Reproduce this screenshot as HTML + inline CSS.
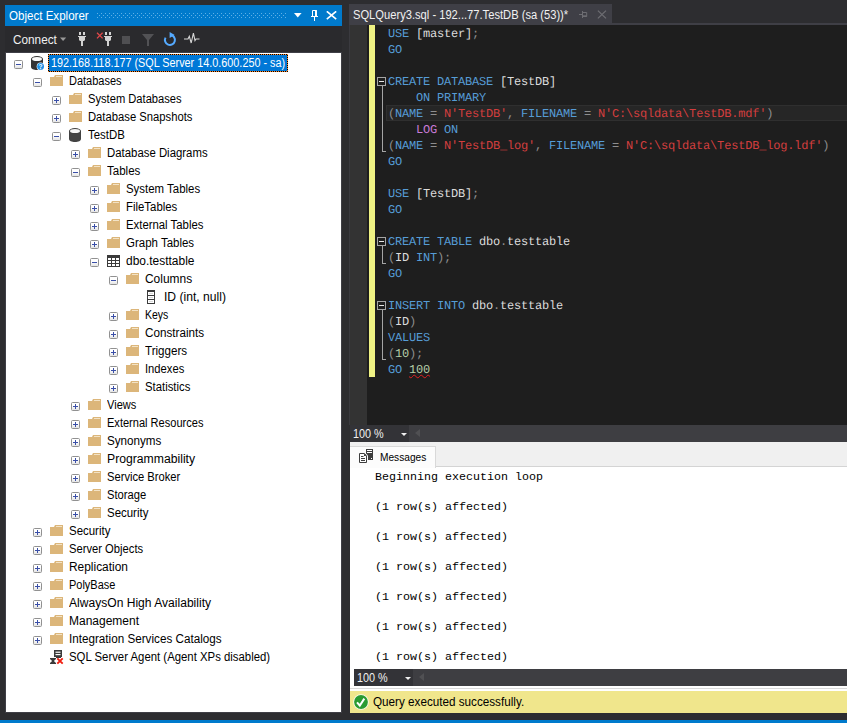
<!DOCTYPE html>
<html><head><meta charset="utf-8"><title>SSMS</title>
<style>
*{margin:0;padding:0;box-sizing:border-box}
html,body{width:847px;height:723px;overflow:hidden;background:#2d2d30}
body{position:relative;font-family:"Liberation Sans", sans-serif;font-size:12px;color:#000}
.abs{position:absolute}
.t{position:absolute;display:block;transform-origin:0 50%;white-space:nowrap}
/* object explorer */
#oeh{position:absolute;left:5px;top:5px;width:337px;height:21px;background:#007acc;color:#fff;line-height:21px}
#oeh .ttl{position:absolute;left:4.4px;top:0}
#grip{position:absolute;left:92px;top:8px;width:190px;height:5px;
 background-image:radial-gradient(circle at .5px .5px,#5fb0e6 .55px,transparent .6px),radial-gradient(circle at .5px .5px,#5fb0e6 .55px,transparent .6px),radial-gradient(circle at .5px .5px,#5fb0e6 .55px,transparent .6px);
 background-size:4px 5px,4px 5px,4px 5px;background-position:0 0,2px 2px,0 4px;background-repeat:repeat-x}
#oetb{position:absolute;left:5px;top:26px;width:337px;height:26px;background:#2a2a2d;color:#f1f1f1;line-height:26px}
#tree{position:absolute;left:6px;top:53px;width:335px;height:659px;background:#fff;overflow:hidden}
#treeb{position:absolute;left:5px;top:52px;width:337px;height:661px;background:#3f3f46}
.lb{position:absolute;height:18px;line-height:18px;white-space:nowrap}
.ic{display:block}
.ex{position:absolute;width:9px;height:9px;border:1px solid #919191;border-radius:1.5px;background:linear-gradient(#fff 40%,#e4e4e4)}
.ex .h{position:absolute;left:1px;top:3px;width:5px;height:1px;background:#3a4fa8}
.ex .v{position:absolute;left:3px;top:1px;width:1px;height:5px;background:#3a4fa8}
.sel{position:absolute;padding:1px;background:repeating-conic-gradient(#ff8728 0% 25%,#000 0% 50%) 0 0/2px 2px}
.sel div{width:100%;height:100%;background:#0078d7}
/* editor */
#tab{position:absolute;left:349px;top:4px;width:263px;height:20px;background:#3f3f46;color:#f1f1f1;line-height:20px}
#tabline{position:absolute;left:349px;top:23px;width:498px;height:2px;background:#3f3f46}
#ed{position:absolute;left:350px;top:25px;width:497px;height:400px;background:#1e1e1e;overflow:hidden}
#mg{position:absolute;left:350px;top:25px;width:17px;height:400px;background:#333333}
#yb{position:absolute;left:369px;top:25px;width:6px;height:352px;background:#eff284}
#cur{position:absolute;left:386px;top:105px;width:470px;height:16px;background:#262626;border:1px solid #2f2f2f}
#code{position:absolute;left:388px;top:26px;font-family:"Liberation Mono", monospace;font-size:12px;letter-spacing:-0.2px;text-rendering:geometricPrecision;color:#dcdcdc;white-space:pre}
.ln{height:16px;line-height:16px}
.k{color:#569cd6} .s{color:#d33e3e} .g{color:#8e8e8e} .n{color:#b5cea8} .m{color:#c97bd7}
.sq{background:repeating-linear-gradient(90deg,transparent 0,transparent 0) ;text-decoration:underline wavy #e02020 1px;text-underline-offset:1px}
.ob{position:absolute;width:9px;height:9px;border:1px solid #a5a5a5;background:#1e1e1e}
.ob i{position:absolute;left:1px;top:3px;width:5px;height:1px;background:#e6e6e6}
.zb{position:absolute;height:17px;background:#3e3e42}
.zb .bx{position:absolute;left:0;top:0;height:100%;width:59px;background:#333337;color:#f1f1f1;line-height:17px}
.zb .dd{position:absolute;top:8px;width:0;height:0;border:3px solid transparent;border-top:3.5px solid #f1f1f1;border-bottom:0}
.zb .la{position:absolute;top:4px;width:0;height:0;border:4.5px solid transparent;border-right:5px solid #505053;border-left:0}
/* messages */
#mp{position:absolute;left:350px;top:442px;width:497px;height:249px;background:#fff}
#mts{position:absolute;left:0;top:0;width:100%;height:25px;background:#f0f0f0;border-bottom:1px solid #d4d4d4}
#mtab{position:absolute;left:0;top:4px;width:86px;height:22px;background:#fcfcfc;border:1px solid #d9d9d9;border-bottom:0;border-left:0;font-size:11px;line-height:21px}
#msg{position:absolute;left:25px;top:27.5px;font-family:"Liberation Mono", monospace;font-size:11.67px;color:#000;white-space:pre}
.ml{height:15px;line-height:15px}
#sb{position:absolute;left:350px;top:691px;width:497px;height:22px;background:#f0e68c;line-height:22px}
#bot{position:absolute;left:0;top:720px;width:847px;height:3px;background:#007acc}
</style></head>
<body>
<!-- Object Explorer -->
<div id="oeh"><span class="t" style="left:4.40px;top:1px;font-size:12px;transform:scaleX(0.9637);line-height:21px">Object Explorer</span><div id="grip"></div>
<svg class="abs" style="left:289px;top:7.5px" width="8" height="5" viewBox="0 0 8 5"><path d="M0 0H7.6L3.8 4.4Z" fill="#fff"/></svg>
<!-- pin: x 311-318, y 10-20 -->
<svg class="abs" style="left:305px;top:5px" width="9" height="11" viewBox="0 0 9 11"><path d="M2.5 .5H6.5V6.5H2.5Z" fill="none" stroke="#fff" stroke-width="1"/><rect x="5" y="0" width="1.6" height="7" fill="#fff"/><rect x="1" y="6" width="7" height="1" fill="#fff"/><rect x="4" y="7" width="1" height="4" fill="#fff"/></svg>
<svg class="abs" style="left:321px;top:6px" width="11" height="9" viewBox="0 0 11 9"><path d="M.8 .3L10.200 8.100M10.200 .3L.8 8.100" stroke="#fff" stroke-width="1.6"/></svg>
</div>
<div id="oetb"><span class="t" style="left:7.50px;top:1px;font-size:12px;transform:scaleX(0.981);line-height:26px">Connect</span>
<svg class="abs" style="left:55px;top:11px" width="7" height="5" viewBox="0 0 7 5"><path d="M0 .5H6.2L3.1 4Z" fill="#999"/></svg>
<!-- plug 1 : x 78-86, y 32-46 -->
<svg class="abs" style="left:73px;top:6px" width="8" height="14" viewBox="0 0 8 14"><g fill="#d2d2d2"><rect x="1" y="0" width="2" height="3"/><rect x="5" y="0" width="2" height="3"/><rect x="0" y="4" width="8" height="1"/><path d="M1 5H7V8L6 9H2L1 8Z"/><rect x="3" y="9" width="2" height="5"/></g></svg>
<!-- red x -->
<svg class="abs" style="left:91px;top:6px" width="8" height="8" viewBox="0 0 8 8"><path d="M1 .8L6.6 6.4M6.6 .8L1 6.4" stroke="#e0484a" stroke-width="1.3"/></svg>
<!-- plug 2 : x 103.5-111.3 -->
<svg class="abs" style="left:98.5px;top:6px" width="8" height="14" viewBox="0 0 8 14"><g fill="#d2d2d2"><rect x="1" y="0" width="2" height="3"/><rect x="5" y="0" width="2" height="3"/><rect x="0" y="4" width="8" height="1"/><path d="M1 5H7V8L6 9H2L1 8Z"/><rect x="3" y="9" width="2" height="5"/></g></svg>
<!-- stop -->
<div class="abs" style="left:117px;top:9.5px;width:8px;height:8px;background:#4f4f52"></div>
<!-- filter -->
<svg class="abs" style="left:137px;top:8px" width="12" height="13" viewBox="0 0 12 13"><path d="M0 0H12L7 6V12H5V6Z" fill="#525255"/></svg>
<!-- refresh : x 163.7-176.4, y 31.8-46.7 -->
<svg class="abs" style="left:158px;top:5px" width="14" height="16" viewBox="0 0 14 16"><path d="M7.6 4A5 5 0 1 1 2.5 6.6" fill="none" stroke="#55aaff" stroke-width="2"/><path d="M6.6 .9L11.7 3.9L6.6 6.9Z" fill="#55aaff"/></svg>
<!-- activity -->
<svg class="abs" style="left:179px;top:6px" width="16" height="13" viewBox="0 0 16 13"><path d="M0 7H4L5.3 4.3L7.2 11L9.4 1.2L11 8.6L12 7H15.5" fill="none" stroke="#d6d6d6" stroke-width="1.1" stroke-linejoin="miter"/></svg>
</div>
<div id="treeb"></div>
<div id="tree">
<div class="ex" style="left:8px;top:7px"><i class="h"></i></div><div style="position:absolute;left:24px;top:1px"><svg class="ic" width="16" height="18" viewBox="0 0 16 18"><path d="M1 5V13C1 14.7 3.7 16 7 16S13 14.7 13 13V5Z" fill="#333"/><ellipse cx="7" cy="5" rx="6" ry="3" fill="#333"/><ellipse cx="7" cy="5" rx="5" ry="2.1" fill="#fafafa"/><circle cx="10.6" cy="12.4" r="3.9" fill="#fff"/><circle cx="10.6" cy="12.4" r="3.4" fill="#1e8fe6"/><text x="10.6" y="14.9" font-family='"Liberation Sans",sans-serif' font-weight="bold" font-size="6.5" fill="#fff" text-anchor="middle">?</text></svg></div><div class="sel" style="left:42px;top:1px;width:240px;height:18px"><div></div></div><span class="t" style="left:45.00px;top:1px;font-size:12px;transform:scaleX(0.9021);color:#fff;line-height:18px;height:18px">192.168.118.177 (SQL Server 14.0.600.250 - sa)</span>
<div class="ex" style="left:27px;top:25px"><i class="h"></i></div><div style="position:absolute;left:43px;top:19px"><svg class="ic" width="16" height="18" viewBox="0 0 16 18"><path d="M1 5H5L6 3H14V14H1Z" fill="#dcb67a"/><rect x="7" y="4" width="6" height="1" fill="#f3e3c6"/></svg></div><span class="t" style="left:63.30px;top:19px;font-size:12px;transform:scaleX(0.9169);line-height:18px;height:18px">Databases</span>
<div class="ex" style="left:46px;top:43px"><i class="h"></i><i class="v"></i></div><div style="position:absolute;left:62px;top:37px"><svg class="ic" width="16" height="18" viewBox="0 0 16 18"><path d="M1 5H5L6 3H14V14H1Z" fill="#dcb67a"/><rect x="7" y="4" width="6" height="1" fill="#f3e3c6"/></svg></div><span class="t" style="left:82.30px;top:37px;font-size:12px;transform:scaleX(0.9294);line-height:18px;height:18px">System Databases</span>
<div class="ex" style="left:46px;top:61px"><i class="h"></i><i class="v"></i></div><div style="position:absolute;left:62px;top:55px"><svg class="ic" width="16" height="18" viewBox="0 0 16 18"><path d="M1 5H5L6 3H14V14H1Z" fill="#dcb67a"/><rect x="7" y="4" width="6" height="1" fill="#f3e3c6"/></svg></div><span class="t" style="left:82.30px;top:55px;font-size:12px;transform:scaleX(0.9371);line-height:18px;height:18px">Database Snapshots</span>
<div class="ex" style="left:46px;top:79px"><i class="h"></i></div><div style="position:absolute;left:62px;top:73px"><svg class="ic" width="16" height="18" viewBox="0 0 16 18"><path d="M1 5V13C1 14.7 3.7 16 7 16S13 14.7 13 13V5Z" fill="#424242"/><ellipse cx="7" cy="5" rx="6" ry="3" fill="#424242"/><ellipse cx="7" cy="5" rx="5" ry="2.1" fill="#f4f4f4"/></svg></div><span class="t" style="left:82.30px;top:73px;font-size:12px;transform:scaleX(0.9515);line-height:18px;height:18px">TestDB</span>
<div class="ex" style="left:65px;top:97px"><i class="h"></i><i class="v"></i></div><div style="position:absolute;left:81px;top:91px"><svg class="ic" width="16" height="18" viewBox="0 0 16 18"><path d="M1 5H5L6 3H14V14H1Z" fill="#dcb67a"/><rect x="7" y="4" width="6" height="1" fill="#f3e3c6"/></svg></div><span class="t" style="left:101.30px;top:91px;font-size:12px;transform:scaleX(0.9486);line-height:18px;height:18px">Database Diagrams</span>
<div class="ex" style="left:65px;top:115px"><i class="h"></i></div><div style="position:absolute;left:81px;top:109px"><svg class="ic" width="16" height="18" viewBox="0 0 16 18"><path d="M1 5H5L6 3H14V14H1Z" fill="#dcb67a"/><rect x="7" y="4" width="6" height="1" fill="#f3e3c6"/></svg></div><span class="t" style="left:101.30px;top:109px;font-size:12px;transform:scaleX(0.96);line-height:18px;height:18px">Tables</span>
<div class="ex" style="left:84px;top:133px"><i class="h"></i><i class="v"></i></div><div style="position:absolute;left:100px;top:127px"><svg class="ic" width="16" height="18" viewBox="0 0 16 18"><path d="M1 5H5L6 3H14V14H1Z" fill="#dcb67a"/><rect x="7" y="4" width="6" height="1" fill="#f3e3c6"/></svg></div><span class="t" style="left:120.30px;top:127px;font-size:12px;transform:scaleX(0.9522);line-height:18px;height:18px">System Tables</span>
<div class="ex" style="left:84px;top:151px"><i class="h"></i><i class="v"></i></div><div style="position:absolute;left:100px;top:145px"><svg class="ic" width="16" height="18" viewBox="0 0 16 18"><path d="M1 5H5L6 3H14V14H1Z" fill="#dcb67a"/><rect x="7" y="4" width="6" height="1" fill="#f3e3c6"/></svg></div><span class="t" style="left:120.30px;top:145px;font-size:12px;transform:scaleX(0.9496);line-height:18px;height:18px">FileTables</span>
<div class="ex" style="left:84px;top:169px"><i class="h"></i><i class="v"></i></div><div style="position:absolute;left:100px;top:163px"><svg class="ic" width="16" height="18" viewBox="0 0 16 18"><path d="M1 5H5L6 3H14V14H1Z" fill="#dcb67a"/><rect x="7" y="4" width="6" height="1" fill="#f3e3c6"/></svg></div><span class="t" style="left:120.30px;top:163px;font-size:12px;transform:scaleX(0.9458);line-height:18px;height:18px">External Tables</span>
<div class="ex" style="left:84px;top:187px"><i class="h"></i><i class="v"></i></div><div style="position:absolute;left:100px;top:181px"><svg class="ic" width="16" height="18" viewBox="0 0 16 18"><path d="M1 5H5L6 3H14V14H1Z" fill="#dcb67a"/><rect x="7" y="4" width="6" height="1" fill="#f3e3c6"/></svg></div><span class="t" style="left:120.30px;top:181px;font-size:12px;transform:scaleX(0.9569);line-height:18px;height:18px">Graph Tables</span>
<div class="ex" style="left:84px;top:205px"><i class="h"></i></div><div style="position:absolute;left:100px;top:199px"><svg class="ic" width="16" height="18" viewBox="0 0 16 18"><rect x="1" y="3" width="13" height="12" fill="#3b3b3b"/><g fill="#fff"><rect x="2" y="6" width="3" height="2"/><rect x="6" y="6" width="3" height="2"/><rect x="10" y="6" width="3" height="2"/><rect x="2" y="9" width="3" height="2"/><rect x="6" y="9" width="3" height="2"/><rect x="10" y="9" width="3" height="2"/><rect x="2" y="12" width="3" height="2"/><rect x="6" y="12" width="3" height="2"/><rect x="10" y="12" width="3" height="2"/></g></svg></div><span class="t" style="left:120.30px;top:199px;font-size:12px;transform:scaleX(0.9965);line-height:18px;height:18px">dbo.testtable</span>
<div class="ex" style="left:103px;top:223px"><i class="h"></i></div><div style="position:absolute;left:119px;top:217px"><svg class="ic" width="16" height="18" viewBox="0 0 16 18"><path d="M1 5H5L6 3H14V14H1Z" fill="#dcb67a"/><rect x="7" y="4" width="6" height="1" fill="#f3e3c6"/></svg></div><span class="t" style="left:139.30px;top:217px;font-size:12px;transform:scaleX(0.9947);line-height:18px;height:18px">Columns</span>
<div style="position:absolute;left:138px;top:235px"><svg class="ic" width="16" height="18" viewBox="0 0 16 18"><rect x="3" y="2" width="8" height="14" fill="#3b3b3b"/><g fill="#fff"><rect x="4" y="4" width="6" height="3"/><rect x="4" y="8" width="6" height="3"/><rect x="4" y="12" width="6" height="3"/></g><g fill="#d8d8d8"><rect x="5" y="5" width="4" height="1"/><rect x="5" y="9" width="4" height="1"/><rect x="5" y="13" width="4" height="1"/></g></svg></div><span class="t" style="left:157.89px;top:235px;font-size:12px;transform:scaleX(1.0107);line-height:18px;height:18px">ID (int, null)</span>
<div class="ex" style="left:103px;top:259px"><i class="h"></i><i class="v"></i></div><div style="position:absolute;left:119px;top:253px"><svg class="ic" width="16" height="18" viewBox="0 0 16 18"><path d="M1 5H5L6 3H14V14H1Z" fill="#dcb67a"/><rect x="7" y="4" width="6" height="1" fill="#f3e3c6"/></svg></div><span class="t" style="left:139.30px;top:253px;font-size:12px;transform:scaleX(0.8734);line-height:18px;height:18px">Keys</span>
<div class="ex" style="left:103px;top:277px"><i class="h"></i><i class="v"></i></div><div style="position:absolute;left:119px;top:271px"><svg class="ic" width="16" height="18" viewBox="0 0 16 18"><path d="M1 5H5L6 3H14V14H1Z" fill="#dcb67a"/><rect x="7" y="4" width="6" height="1" fill="#f3e3c6"/></svg></div><span class="t" style="left:139.30px;top:271px;font-size:12px;transform:scaleX(0.9738);line-height:18px;height:18px">Constraints</span>
<div class="ex" style="left:103px;top:295px"><i class="h"></i><i class="v"></i></div><div style="position:absolute;left:119px;top:289px"><svg class="ic" width="16" height="18" viewBox="0 0 16 18"><path d="M1 5H5L6 3H14V14H1Z" fill="#dcb67a"/><rect x="7" y="4" width="6" height="1" fill="#f3e3c6"/></svg></div><span class="t" style="left:139.30px;top:289px;font-size:12px;transform:scaleX(0.9664);line-height:18px;height:18px">Triggers</span>
<div class="ex" style="left:103px;top:313px"><i class="h"></i><i class="v"></i></div><div style="position:absolute;left:119px;top:307px"><svg class="ic" width="16" height="18" viewBox="0 0 16 18"><path d="M1 5H5L6 3H14V14H1Z" fill="#dcb67a"/><rect x="7" y="4" width="6" height="1" fill="#f3e3c6"/></svg></div><span class="t" style="left:138.97px;top:307px;font-size:12px;transform:scaleX(0.9335);line-height:18px;height:18px">Indexes</span>
<div class="ex" style="left:103px;top:331px"><i class="h"></i><i class="v"></i></div><div style="position:absolute;left:119px;top:325px"><svg class="ic" width="16" height="18" viewBox="0 0 16 18"><path d="M1 5H5L6 3H14V14H1Z" fill="#dcb67a"/><rect x="7" y="4" width="6" height="1" fill="#f3e3c6"/></svg></div><span class="t" style="left:139.30px;top:325px;font-size:12px;transform:scaleX(0.9435);line-height:18px;height:18px">Statistics</span>
<div class="ex" style="left:65px;top:349px"><i class="h"></i><i class="v"></i></div><div style="position:absolute;left:81px;top:343px"><svg class="ic" width="16" height="18" viewBox="0 0 16 18"><path d="M1 5H5L6 3H14V14H1Z" fill="#dcb67a"/><rect x="7" y="4" width="6" height="1" fill="#f3e3c6"/></svg></div><span class="t" style="left:101.30px;top:343px;font-size:12px;transform:scaleX(0.9216);line-height:18px;height:18px">Views</span>
<div class="ex" style="left:65px;top:367px"><i class="h"></i><i class="v"></i></div><div style="position:absolute;left:81px;top:361px"><svg class="ic" width="16" height="18" viewBox="0 0 16 18"><path d="M1 5H5L6 3H14V14H1Z" fill="#dcb67a"/><rect x="7" y="4" width="6" height="1" fill="#f3e3c6"/></svg></div><span class="t" style="left:101.30px;top:361px;font-size:12px;transform:scaleX(0.9206);line-height:18px;height:18px">External Resources</span>
<div class="ex" style="left:65px;top:385px"><i class="h"></i><i class="v"></i></div><div style="position:absolute;left:81px;top:379px"><svg class="ic" width="16" height="18" viewBox="0 0 16 18"><path d="M1 5H5L6 3H14V14H1Z" fill="#dcb67a"/><rect x="7" y="4" width="6" height="1" fill="#f3e3c6"/></svg></div><span class="t" style="left:101.30px;top:379px;font-size:12px;transform:scaleX(0.9693);line-height:18px;height:18px">Synonyms</span>
<div class="ex" style="left:65px;top:403px"><i class="h"></i><i class="v"></i></div><div style="position:absolute;left:81px;top:397px"><svg class="ic" width="16" height="18" viewBox="0 0 16 18"><path d="M1 5H5L6 3H14V14H1Z" fill="#dcb67a"/><rect x="7" y="4" width="6" height="1" fill="#f3e3c6"/></svg></div><span class="t" style="left:101.30px;top:397px;font-size:12px;transform:scaleX(1.0163);line-height:18px;height:18px">Programmability</span>
<div class="ex" style="left:65px;top:421px"><i class="h"></i><i class="v"></i></div><div style="position:absolute;left:81px;top:415px"><svg class="ic" width="16" height="18" viewBox="0 0 16 18"><path d="M1 5H5L6 3H14V14H1Z" fill="#dcb67a"/><rect x="7" y="4" width="6" height="1" fill="#f3e3c6"/></svg></div><span class="t" style="left:101.30px;top:415px;font-size:12px;transform:scaleX(0.9314);line-height:18px;height:18px">Service Broker</span>
<div class="ex" style="left:65px;top:439px"><i class="h"></i><i class="v"></i></div><div style="position:absolute;left:81px;top:433px"><svg class="ic" width="16" height="18" viewBox="0 0 16 18"><path d="M1 5H5L6 3H14V14H1Z" fill="#dcb67a"/><rect x="7" y="4" width="6" height="1" fill="#f3e3c6"/></svg></div><span class="t" style="left:101.30px;top:433px;font-size:12px;transform:scaleX(0.9326);line-height:18px;height:18px">Storage</span>
<div class="ex" style="left:65px;top:457px"><i class="h"></i><i class="v"></i></div><div style="position:absolute;left:81px;top:451px"><svg class="ic" width="16" height="18" viewBox="0 0 16 18"><path d="M1 5H5L6 3H14V14H1Z" fill="#dcb67a"/><rect x="7" y="4" width="6" height="1" fill="#f3e3c6"/></svg></div><span class="t" style="left:101.30px;top:451px;font-size:12px;transform:scaleX(0.9551);line-height:18px;height:18px">Security</span>
<div class="ex" style="left:27px;top:475px"><i class="h"></i><i class="v"></i></div><div style="position:absolute;left:43px;top:469px"><svg class="ic" width="16" height="18" viewBox="0 0 16 18"><path d="M1 5H5L6 3H14V14H1Z" fill="#dcb67a"/><rect x="7" y="4" width="6" height="1" fill="#f3e3c6"/></svg></div><span class="t" style="left:63.30px;top:469px;font-size:12px;transform:scaleX(0.9551);line-height:18px;height:18px">Security</span>
<div class="ex" style="left:27px;top:493px"><i class="h"></i><i class="v"></i></div><div style="position:absolute;left:43px;top:487px"><svg class="ic" width="16" height="18" viewBox="0 0 16 18"><path d="M1 5H5L6 3H14V14H1Z" fill="#dcb67a"/><rect x="7" y="4" width="6" height="1" fill="#f3e3c6"/></svg></div><span class="t" style="left:63.30px;top:487px;font-size:12px;transform:scaleX(0.9337);line-height:18px;height:18px">Server Objects</span>
<div class="ex" style="left:27px;top:511px"><i class="h"></i><i class="v"></i></div><div style="position:absolute;left:43px;top:505px"><svg class="ic" width="16" height="18" viewBox="0 0 16 18"><path d="M1 5H5L6 3H14V14H1Z" fill="#dcb67a"/><rect x="7" y="4" width="6" height="1" fill="#f3e3c6"/></svg></div><span class="t" style="left:63.30px;top:505px;font-size:12px;transform:scaleX(0.9933);line-height:18px;height:18px">Replication</span>
<div class="ex" style="left:27px;top:529px"><i class="h"></i><i class="v"></i></div><div style="position:absolute;left:43px;top:523px"><svg class="ic" width="16" height="18" viewBox="0 0 16 18"><path d="M1 5H5L6 3H14V14H1Z" fill="#dcb67a"/><rect x="7" y="4" width="6" height="1" fill="#f3e3c6"/></svg></div><span class="t" style="left:63.30px;top:523px;font-size:12px;transform:scaleX(0.9133);line-height:18px;height:18px">PolyBase</span>
<div class="ex" style="left:27px;top:547px"><i class="h"></i><i class="v"></i></div><div style="position:absolute;left:43px;top:541px"><svg class="ic" width="16" height="18" viewBox="0 0 16 18"><path d="M1 5H5L6 3H14V14H1Z" fill="#dcb67a"/><rect x="7" y="4" width="6" height="1" fill="#f3e3c6"/></svg></div><span class="t" style="left:63.30px;top:541px;font-size:12px;transform:scaleX(1.0061);line-height:18px;height:18px">AlwaysOn High Availability</span>
<div class="ex" style="left:27px;top:565px"><i class="h"></i><i class="v"></i></div><div style="position:absolute;left:43px;top:559px"><svg class="ic" width="16" height="18" viewBox="0 0 16 18"><path d="M1 5H5L6 3H14V14H1Z" fill="#dcb67a"/><rect x="7" y="4" width="6" height="1" fill="#f3e3c6"/></svg></div><span class="t" style="left:63.30px;top:559px;font-size:12px;transform:scaleX(0.9999);line-height:18px;height:18px">Management</span>
<div class="ex" style="left:27px;top:583px"><i class="h"></i><i class="v"></i></div><div style="position:absolute;left:43px;top:577px"><svg class="ic" width="16" height="18" viewBox="0 0 16 18"><path d="M1 5H5L6 3H14V14H1Z" fill="#dcb67a"/><rect x="7" y="4" width="6" height="1" fill="#f3e3c6"/></svg></div><span class="t" style="left:62.93px;top:577px;font-size:12px;transform:scaleX(0.9734);line-height:18px;height:18px">Integration Services Catalogs</span>
<div style="position:absolute;left:43px;top:595px"><svg class="ic" width="16" height="18" viewBox="0 0 16 18"><rect x="5" y="2" width="8" height="7" fill="#3b3b3b"/><rect x="7" y="9" width="5" height="1" fill="#3b3b3b"/><rect x="6.5" y="3.6" width="5" height="1.2" fill="#fff"/><rect x="6.5" y="6" width="5" height="1.2" fill="#fff"/><path d="M1 10H7V11L4.9 13L7 15V16H1V15L3.1 13L1 11Z" fill="#3b3b3b"/><path d="M8.3 10.3L13.7 15.7M13.7 10.3L8.3 15.7" stroke="#f01d0f" stroke-width="1.9"/></svg></div><span class="t" style="left:63.30px;top:595px;font-size:12px;transform:scaleX(0.9473);line-height:18px;height:18px">SQL Server Agent (Agent XPs disabled)</span>
</div>
<!-- Document tab -->
<div id="tab"><span class="t" style="left:4.30px;top:1px;font-size:12px;transform:scaleX(0.9298);line-height:20px">SQLQuery3.sql - 192...77.TestDB (sa (53))*</span>
<!-- pin (sideways) x 579.4-587.3, centre y 14.5 -->
<svg class="abs" style="left:230px;top:6px" width="9" height="9" viewBox="0 0 9 9"><g fill="none" stroke="#6d6d72" stroke-width="1"><path d="M0 4.5H3.5"/><path d="M3.5 1V8"/><path d="M3.5 2.5H7.700V6.500H3.500"/></g><rect x="3.5" y="5.3" width="4.200" height="1.600" fill="#6d6d72"/></svg>
<svg class="abs" style="left:248px;top:6px" width="10" height="9" viewBox="0 0 10 9"><path d="M.9 .6L9 8.400M9 .6L.9 8.400" stroke="#6d6d72" stroke-width="1.3"/></svg>
</div>
<div id="tabline"></div>
<!-- Editor -->
<div id="ed"></div>
<div id="mg"></div><div class="abs" style="left:349px;top:25px;width:1px;height:400px;background:#3a3a3f"></div>
<div id="yb"></div>
<div id="cur"></div>
<div class="ob" style="left:377px;top:77px"><i></i></div><div style="position:absolute;left:382px;top:86px;width:1px;height:66px;background:#a5a5a5"></div><div style="position:absolute;left:382px;top:151px;width:4px;height:1px;background:#a5a5a5"></div><div class="ob" style="left:377px;top:237px"><i></i></div><div style="position:absolute;left:382px;top:246px;width:1px;height:18px;background:#a5a5a5"></div><div style="position:absolute;left:382px;top:263px;width:4px;height:1px;background:#a5a5a5"></div><div class="ob" style="left:377px;top:301px"><i></i></div><div style="position:absolute;left:382px;top:310px;width:1px;height:50px;background:#a5a5a5"></div><div style="position:absolute;left:382px;top:359px;width:4px;height:1px;background:#a5a5a5"></div>
<div id="code"><div class="ln"><span class="k">USE</span> [master]<span class="g">;</span></div><div class="ln"><span class="k">GO</span></div><div class="ln">&nbsp;</div><div class="ln"><span class="k">CREATE DATABASE</span> [TestDB]</div><div class="ln">    <span class="k">ON PRIMARY</span></div><div class="ln"><span class="g">(</span><span class="k">NAME</span><span class="g"> = </span><span class="s">N&#x27;TestDB&#x27;</span><span class="g">, </span><span class="k">FILENAME</span><span class="g"> = </span><span class="s">N&#x27;C:\sqldata\TestDB.mdf&#x27;</span><span class="g">)</span></div><div class="ln">    <span class="m">LOG</span> <span class="k">ON</span></div><div class="ln"><span class="g">(</span><span class="k">NAME</span><span class="g"> = </span><span class="s">N&#x27;TestDB_log&#x27;</span><span class="g">, </span><span class="k">FILENAME</span><span class="g"> = </span><span class="s">N&#x27;C:\sqldata\TestDB_log.ldf&#x27;</span><span class="g">)</span></div><div class="ln"><span class="k">GO</span></div><div class="ln">&nbsp;</div><div class="ln"><span class="k">USE</span> [TestDB]<span class="g">;</span></div><div class="ln"><span class="k">GO</span></div><div class="ln">&nbsp;</div><div class="ln"><span class="k">CREATE TABLE</span> dbo<span class="g">.</span>testtable</div><div class="ln"><span class="g">(</span>ID <span class="k">INT</span><span class="g">);</span></div><div class="ln"><span class="k">GO</span></div><div class="ln">&nbsp;</div><div class="ln"><span class="k">INSERT INTO</span> dbo<span class="g">.</span>testtable</div><div class="ln"><span class="g">(</span>ID<span class="g">)</span></div><div class="ln"><span class="k">VALUES</span></div><div class="ln"><span class="g">(</span><span class="n">10</span><span class="g">);</span></div><div class="ln"><span class="k">GO</span> <span class="n sq">100</span></div></div>
<div class="zb" style="left:350px;top:425px;width:497px"><div class="bx"><span class="t" style="left:3.00px;top:1px;font-size:12px;transform:scaleX(0.9023);line-height:17px">100 %</span><i class="dd" style="left:51px"></i></div><i class="la" style="left:65px"></i></div>
<!-- Messages -->
<div id="mp">
<div id="mts"></div>
<div id="mtab"><svg class="abs" style="left:8px;top:1px" width="16" height="16" viewBox="0 0 16 16"><rect x="8" y="1" width="7" height="11" fill="#3e3e3e"/><rect x="9" y="2" width="5" height="1" fill="#fff"/><rect x="9" y="4" width="5" height="1" fill="#fff"/><rect x="13" y="10" width="1" height="1" fill="#fff"/><path d="M0 4.5H7L10 7.5V16H0Z" fill="#fcfcfc"/><path d="M1.5 5.500H6.300L8.500 7.700V14.500H1.500Z" fill="#fff" stroke="#3e3e3e"/><path d="M6 5.500V8H8.500Z" fill="#3e3e3e"/><path d="M3 8.500H5.500M3 10.500H7M3 12.500H7" stroke="#3e3e3e"/></svg><span class="t" style="left:30.40px;top:0px;font-size:11px;transform:scaleX(0.9243);line-height:21px">Messages</span></div>
<div id="msg"><div class="ml">Beginning execution loop</div><div class="ml">&nbsp;</div><div class="ml">(1 row(s) affected)</div><div class="ml">&nbsp;</div><div class="ml">(1 row(s) affected)</div><div class="ml">&nbsp;</div><div class="ml">(1 row(s) affected)</div><div class="ml">&nbsp;</div><div class="ml">(1 row(s) affected)</div><div class="ml">&nbsp;</div><div class="ml">(1 row(s) affected)</div><div class="ml">&nbsp;</div><div class="ml">(1 row(s) affected)</div></div>
</div>
<div class="zb" style="left:354px;top:669px;width:493px"><div class="bx"><span class="t" style="left:3.00px;top:1px;font-size:12px;transform:scaleX(0.9023);line-height:17px">100 %</span><i class="dd" style="left:51px"></i></div><i class="la" style="left:65px"></i></div>
<div class="abs" style="left:350px;top:688px;width:497px;height:1px;background:#d9d9d9"></div>
<div id="sb"><svg class="abs" style="left:3px;top:3px" width="16" height="16" viewBox="0 0 16 16"><circle cx="8" cy="8" r="7.8" fill="#fbfbf0"/><circle cx="8" cy="8" r="6.9" fill="#2b9b32"/><path d="M4 8.400L6.800 11.500L11.300 4.600" fill="none" stroke="#fff" stroke-width="2"/></svg><span class="t" style="left:23.20px;top:0px;font-size:12px;transform:scaleX(0.9739);line-height:22px">Query executed successfully.</span></div>
<div id="bot"></div>
</body></html>
